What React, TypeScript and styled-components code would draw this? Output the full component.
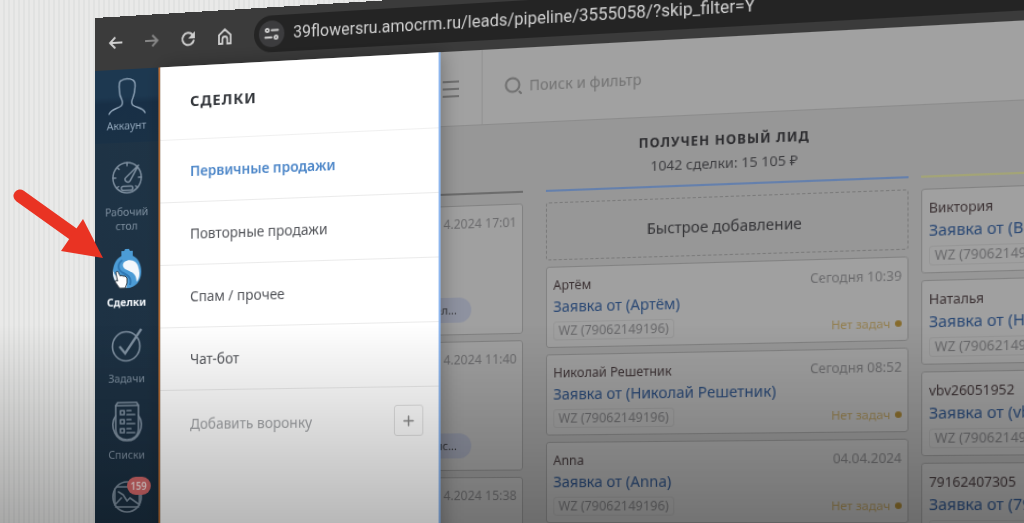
import React from "react";
import styled, { createGlobalStyle } from "styled-components";

const Global = createGlobalStyle`
  *, *::before, *::after { box-sizing: border-box; }
  body { margin: 0; background: #e4e4e3; overflow: hidden; }
  button, input { font: inherit; color: inherit; border: 0; padding: 0; background: none; }
  input { outline: 0; min-width: 0; }
  a { color: inherit; text-decoration: none; }
  svg { display: block; }
`;

/* Backdrop with the fine vertical stripes of a filmed monitor */
const Stage = styled.div`
  position: relative;
  height: 100vh;
  overflow: hidden;
  padding: 18px 0 0 95px;
  font-family: "Noto Sans", "Open Sans", sans-serif;
  background: repeating-linear-gradient(90deg, #e9e9e8 0 3px, #e1e2e1 3px 5px);
`;

/* The monitor is seen slightly from the left */
const Screen = styled.div`
  display: flex;
  flex-direction: column;
  min-height: 100%;
  transform-origin: 0 502px;
  transform: perspective(3000px) rotateY(-20deg);
  background: #979797;
`;

const BrowserBar = styled.div`
  display: flex;
  align-items: center;
  flex: none;
  height: 53px;
  padding: 0 0 2px 13px;
  background: #3b3b3b;
  color: #d0d0d0;
`;

const BarButton = styled.button<{ $dim?: boolean }>`
  width: 18px;
  height: 18px;
  margin-right: 20px;
  opacity: ${(p) => (p.$dim ? 0.5 : 1)};
`;

const AddressPill = styled.label`
  display: flex;
  align-items: center;
  gap: 9px;
  flex: 1;
  height: 36px;
  margin-left: 1px;
  padding-left: 5px;
  border-radius: 18px 0 0 18px;
  background: #242424;
`;

const SiteBadge = styled.span`
  display: grid;
  place-items: center;
  width: 26px;
  height: 26px;
  border-radius: 50%;
  background: #3c3c3e;
`;

const AddressInput = styled.input`
  flex: 1;
  font-family: Roboto, sans-serif;
  font-size: 16px;
  color: #d2d2d2;
`;

const Page = styled.div`
  position: relative;
  display: flex;
  flex: 1;
`;

const Sidebar = styled.nav`
  flex: none;
  width: 69px;
  border-right: 2px solid #c8763a;
  background: linear-gradient(#1f3446, #1d3143 60%, #1b3042);
`;

const NavItem = styled.a<{ $active?: boolean }>`
  display: flex;
  flex-direction: column;
  align-items: center;
  gap: 7px;
  margin-bottom: 15px;
  padding: 0 10px;
  font-size: 11px;
  line-height: 14px;
  text-align: center;
  font-weight: ${(p) => (p.$active ? 700 : 400)};
  color: ${(p) => (p.$active ? "#f2f6fa" : "#7f90a0")};
`;

const AccountItem = styled(NavItem)`
  padding-top: 7px;
  padding-bottom: 10px;
  gap: 2px;
  color: #8fa4b8;
  background: linear-gradient(#1d3850 0 27px, #182f46 34px, #1a3146);
`;

const NavIcon = styled.span`
  position: relative;
  display: grid;
  place-items: center;
  width: 46px;
  height: 40px;
`;

const Badge = styled.span`
  position: absolute;
  top: 0;
  left: 23px;
  padding: 0 4px;
  border-radius: 9px;
  background: #d4686a;
  color: #f6dede;
  font-size: 10px;
  line-height: 18px;
  font-weight: 600;
`;

const MenuPanel = styled.aside`
  position: absolute;
  z-index: 2;
  top: 0;
  bottom: 0;
  left: 69px;
  width: 284px;
  border-right: 2px solid #8db6ee;
  background: #ffffff;
  box-shadow: 2px 0 18px rgba(0, 0, 0, 0.28);
`;

const MenuTitle = styled.h1`
  display: flex;
  align-items: center;
  height: 73px;
  margin: 0;
  padding: 0 0 4px 31px;
  border-bottom: 1px solid #f0f0f0;
  font-size: 15px;
  font-weight: 700;
  letter-spacing: 1px;
  text-transform: uppercase;
  color: #33363b;
`;

const MenuRow = styled.a<{ $active?: boolean }>`
  display: flex;
  align-items: center;
  height: 62px;
  padding-left: 31px;
  border-bottom: 1px solid #ebebeb;
  font-size: 14px;
  font-weight: ${(p) => (p.$active ? 600 : 400)};
  color: ${(p) => (p.$active ? "#4c86c8" : "#54565b")};
`;

const AddRow = styled.div`
  display: flex;
  align-items: center;
  justify-content: space-between;
  height: 64px;
  padding: 0 15px 0 31px;
  font-size: 14px;
  color: #a3a5a8;
`;

const PlusButton = styled.button`
  display: grid;
  place-items: center;
  width: 29px;
  height: 30px;
  border: 1px solid #e2e2e2;
  border-radius: 3px;
  color: #8a8a8a;
`;

const Content = styled.main`
  display: flex;
  flex-direction: column;
  flex: 1;
  min-width: 0;
`;

const TopBar = styled.header`
  display: flex;
  align-items: stretch;
  flex: none;
  height: 72px;
  padding-left: 286px;
  border-bottom: 1px solid #8c8c8c;
  background: #a1a1a1;
  color: #707070;
`;

const ListToggle = styled.button`
  width: 16px;
  margin-right: 22px;
`;

const SearchBox = styled.label`
  display: flex;
  align-items: center;
  gap: 6px;
  flex: 1;
  padding-left: 21px;
  border-left: 1px solid #929292;
`;

const SearchInput = styled.input`
  flex: 1;
  font-size: 14px;
  color: #737373;
  &::placeholder { color: #737373; opacity: 1; }
`;

const Board = styled.div`
  display: flex;
  gap: 11px;
  padding-left: 31px;
`;

const Column = styled.section<{ $after?: number }>`
  flex: none;
  width: 333px;
  margin-right: ${(p) => p.$after ?? 0}px;
`;

const ColumnHead = styled.header<{ $line: string }>`
  height: 66px;
  margin-bottom: 10px;
  padding-top: 13px;
  border-bottom: 2px solid ${(p) => p.$line};
  text-align: center;
`;

const ColumnTitle = styled.h2`
  margin: 0;
  font-size: 12px;
  line-height: 22px;
  font-weight: 700;
  letter-spacing: 1px;
  text-transform: uppercase;
  color: #2b2b2e;
`;

const ColumnTotal = styled.p`
  margin: 0;
  font-size: 13px;
  line-height: 20px;
  color: #3d3d40;
`;

const CardList = styled.div`
  display: flex;
  flex-direction: column;
  gap: 6px;
`;

const QuickAdd = styled.button`
  height: 55px;
  border: 1px dashed #7a7a7a;
  border-radius: 3px;
  font-size: 14px;
  color: #333336;
`;

const Card = styled.article<{ $tall?: boolean }>`
  display: flex;
  flex-direction: column;
  height: ${(p) => (p.$tall ? 124 : 77)}px;
  padding: 8px 5px 5px 6px;
  border: 1px solid #828282;
  border-radius: 3px;
  background: #a0a0a0;
  font-size: 12px;
  line-height: 18px;
`;

const CardLine = styled.div`
  display: flex;
  justify-content: space-between;
  align-items: center;
  white-space: nowrap;
`;

const Person = styled.span`
  color: #3c3234;
`;

const Muted = styled.span`
  margin-left: auto;
  color: #6c6c6e;
`;

const DealLink = styled.a`
  margin-bottom: 3px;
  font-size: 14px;
  line-height: 22px;
  white-space: nowrap;
  color: #2a4874;
`;

const Source = styled.span`
  padding: 0 4px;
  border: 1px solid #969696;
  border-radius: 3px;
  font-size: 12px;
  line-height: 16px;
  color: #6a6a6c;
`;

const NoTasks = styled.span`
  display: flex;
  align-items: center;
  gap: 4px;
  font-size: 11px;
  color: #937f50;
  &::after {
    content: "";
    width: 6px;
    height: 6px;
    border-radius: 50%;
    background: #866b2c;
  }
`;

const TagPill = styled.span`
  align-self: flex-end;
  width: 60px;
  margin: auto 44px 6px 0;
  padding-right: 14px;
  border-radius: 12px;
  background: #8e92a0;
  text-align: right;
  font-size: 11px;
  line-height: 24px;
  color: #36363a;
`;

const Shade = styled.div`
  position: absolute;
  inset: 0;
  pointer-events: none;
  background: linear-gradient(transparent 62%, rgba(0, 0, 0, 0.1) 76%, rgba(0, 0, 0, 0.28));
`;

const Pointer = styled.svg`
  position: absolute;
  top: 180px;
  left: 8px;
`;

const line = { fill: "none", stroke: "currentColor", strokeLinecap: "round", strokeLinejoin: "round" } as const;

const Arrow = ({ flip }: { flip?: boolean }) => (
  <svg width="18" height="18" viewBox="0 0 18 18" {...line} strokeWidth="2" strokeLinecap="butt" strokeLinejoin="miter">
    {flip ? <path d="M2 9h13M9.500 3.500L15 9l-5.500 5.500" /> : <path d="M16 9H3M8.500 3.500L3 9l5.500 5.500" />}
  </svg>
);

const Reload = () => (
  <svg width="18" height="18" viewBox="0 0 18 18" {...line} strokeWidth="2" strokeLinecap="butt">
    <path d="M15 10.500A6 6 0 1 1 13.500 5.200L15 7" />
    <path d="M16 2v7H9z" fill="currentColor" stroke="none" />
  </svg>
);

const Home = () => (
  <svg width="18" height="18" viewBox="0 0 18 18" {...line} strokeWidth="1.800" strokeLinejoin="miter">
    <path d="M3 16V7.500L9 2l6 5.500V16h-3.500v-4.500a2.500 2.500 0 0 0-5 0V16z" />
  </svg>
);

const Tune = () => (
  <svg width="16" height="14" viewBox="0 0 16 14" {...line} strokeWidth="1.800">
    <circle cx="3.500" cy="3.500" r="1.600" />
    <path d="M8 3.500h6.500M1.500 10.500H8" />
    <circle cx="12.500" cy="10.500" r="1.600" />
  </svg>
);

const UserIcon = () => (
  <svg width="42" height="38" viewBox="0 0 42 38" {...line} strokeWidth="1.500">
    <path d="M2 36c2-5 9-5 13-8 2-2 1-5 0-7-2-3-2-5-2-8-1-6 0-10 2-10 3-2 9-2 12 0 2 1 3 5 2 10 0 3-1 5-2 8-1 2-2 5 0 7 4 3 11 3 13 8" />
  </svg>
);

const GaugeIcon = () => (
  <svg width="34" height="34" viewBox="0 0 34 34" {...line} strokeWidth="1.500">
    <circle cx="17" cy="17" r="15" />
    <path d="M29 5L20 20.500a3 3 0 0 1-5-3L29 5zM13 25.500h8a1.500 1.500 0 0 1 0 4h-8a1.500 1.500 0 0 1 0-4zM17 2v3M6.500 6.500l2 2M2 17h3M29 17h3M6 27l2-1.500M28 27l-2-1.500" />
  </svg>
);

const DealsIcon = () => (
  <svg width="34" height="42" viewBox="0 0 34 42">
    <path d="M11 3h3l1-2h4l1 2h3v5c5 2 9 8 9 16 0 9-6 16-15 16S2 33 2 24C2 16 6 10 11 8z" fill="#4c9cd6" />
    <path d="M14 14c6-4 14-1 15 6 2 6 1 11-2 14 0-9-6-10-12-13-3-2-3-5-1-7z" fill="#f3f8fc" />
    <path d="M2 21c0 6 6 8 11 11 4 2 5 5 3 8C7 39 1 31 2 21z" fill="#e8f1f8" />
    <path d="M12 12c-6 4-5 10 1 13s9 5 7 12" fill="none" stroke="#2f78b4" strokeWidth="2" />
    <path d="M5 24l2-1 3 5 1-1 2 1 2 0 2 2v5l-2 5H9l-5-7 2-1 1 1z" fill="#fff" stroke="#27323c" strokeWidth="1" />
  </svg>
);

const TasksIcon = () => (
  <svg width="36" height="38" viewBox="0 0 36 38" {...line} strokeWidth="1.700">
    <circle cx="17" cy="21" r="14.500" />
    <path d="M10 21l6 7L33 4" strokeWidth="2.500" strokeLinecap="butt" strokeLinejoin="miter" />
  </svg>
);

const ListsIcon = () => (
  <svg width="34" height="42" viewBox="0 0 34 42" {...line} strokeWidth="1.700">
    <path d="M5 5l2-3h20l2 3v23c0 7-5 11-12 11S5 35 5 28z" />
    <path d="M5 5h24M5 15C1 20 1 27 4 32c3 6 8 8 13 8s10-2 13-8c3-5 3-12-1-17" />
    <path d="M10 10h4v4h-4zM10 19h4v4h-4zM10 28h4v4h-4zM17 10h4M17 14h8M17 19h4M17 23h8M17 28h4M17 32h8" />
  </svg>
);

const MailIcon = () => (
  <svg width="34" height="34" viewBox="0 0 34 34" {...line} strokeWidth="1.700">
    <circle cx="17" cy="17" r="15" />
    <path d="M6 7h22M4 9v16M30 9v16M5 27h24M8 12l5 3 4 6 3-3 3 2M5 24l6-6M29 24l-6-4" />
  </svg>
);

const deals = [
  { name: "Артём", time: "Сегодня 10:39" },
  { name: "Николай Решетник", time: "Сегодня 08:52" },
  { name: "Anna", time: "04.04.2024" },
];
const nextDeals = ["Виктория", "Наталья", "vbv26051952", "79162407305"];
const oldDeals = [
  { time: "4.2024 17:01", tag: "ел..." },
  { time: "4.2024 11:40", tag: "ис..." },
  { time: "4.2024 15:38", tag: "" },
];

const DealCard = ({ name, time }: { name: string; time?: string }) => (
  <Card>
    <CardLine>
      <Person>{name}</Person>
      {time && <Muted>{time}</Muted>}
    </CardLine>
    <DealLink href="#deal">Заявка от ({name})</DealLink>
    <CardLine>
      <Source>WZ (79062149196)</Source>
      {time && <NoTasks>Нет задач</NoTasks>}
    </CardLine>
  </Card>
);

export default function App() {
  return (
    <Stage>
      <Global />
      <Screen>
        <BrowserBar>
          <BarButton aria-label="Назад"><Arrow /></BarButton>
          <BarButton $dim aria-label="Вперёд"><Arrow flip /></BarButton>
          <BarButton aria-label="Обновить"><Reload /></BarButton>
          <BarButton aria-label="Домой"><Home /></BarButton>
          <AddressPill>
            <SiteBadge><Tune /></SiteBadge>
            <AddressInput aria-label="Адрес" defaultValue="39flowersru.amocrm.ru/leads/pipeline/3555058/?skip_filter=Y" />
          </AddressPill>
        </BrowserBar>
        <Page>
          <Sidebar>
            <AccountItem href="#account"><NavIcon><UserIcon /></NavIcon>Аккаунт</AccountItem>
            <NavItem href="#desk"><NavIcon><GaugeIcon /></NavIcon>Рабочий стол</NavItem>
            <NavItem href="#deals" $active><NavIcon><DealsIcon /></NavIcon>Сделки</NavItem>
            <NavItem href="#tasks"><NavIcon><TasksIcon /></NavIcon>Задачи</NavItem>
            <NavItem href="#lists"><NavIcon><ListsIcon /></NavIcon>Списки</NavItem>
            <NavItem href="#mail"><NavIcon><MailIcon /><Badge>159</Badge></NavIcon></NavItem>
          </Sidebar>
          <MenuPanel>
            <MenuTitle>Сделки</MenuTitle>
            <MenuRow href="#primary" $active>Первичные продажи</MenuRow>
            <MenuRow href="#repeat">Повторные продажи</MenuRow>
            <MenuRow href="#spam">Спам / прочее</MenuRow>
            <MenuRow href="#bot">Чат-бот</MenuRow>
            <AddRow>
              Добавить воронку
              <PlusButton aria-label="Добавить воронку">
                <svg width="11" height="11" viewBox="0 0 11 11" {...line} strokeWidth="1.500"><path d="M5.500 1v9M1 5.500h9" /></svg>
              </PlusButton>
            </AddRow>
          </MenuPanel>
          <Content>
            <TopBar>
              <ListToggle aria-label="Вид списка">
                <svg width="16" height="18" viewBox="0 0 16 18" {...line} strokeWidth="2" strokeLinecap="butt"><path d="M0 2h16M0 9h16M0 16h16" /></svg>
              </ListToggle>
              <SearchBox>
                <svg width="18" height="18" viewBox="0 0 18 18" {...line} strokeWidth="2"><circle cx="8" cy="8" r="6.500" /><path d="M14.500 14.500L16 16" /></svg>
                <SearchInput aria-label="Поиск" placeholder="Поиск и фильтр" />
              </SearchBox>
            </TopBar>
            <Board>
              <Column $after={11}>
                <ColumnHead $line="#6c6c6c" />
                <CardList>
                  {oldDeals.map((d) => (
                    <Card key={d.time} $tall>
                      <CardLine><Muted>{d.time}</Muted></CardLine>
                      {d.tag && <TagPill>{d.tag}</TagPill>}
                    </Card>
                  ))}
                </CardList>
              </Column>
              <Column>
                <ColumnHead $line="#6580ac">
                  <ColumnTitle>Получен новый лид</ColumnTitle>
                  <ColumnTotal>1042 сделки: 15 105 ₽</ColumnTotal>
                </ColumnHead>
                <CardList>
                  <QuickAdd>Быстрое добавление</QuickAdd>
                  {deals.map((d) => <DealCard key={d.name} {...d} />)}
                </CardList>
              </Column>
              <Column>
                <ColumnHead $line="#a3a477" />
                <CardList>
                  {nextDeals.map((name) => <DealCard key={name} name={name} />)}
                </CardList>
              </Column>
            </Board>
          </Content>
        </Page>
      </Screen>
      <Shade />
      <Pointer width="100" height="84" viewBox="0 0 100 84" aria-hidden="true">
        <path d="M12 16l56 40" stroke="#e93323" strokeWidth="13" strokeLinecap="round" />
        <path d="M95 78L75 39 53 71z" fill="#e93323" />
      </Pointer>
    </Stage>
  );
}
